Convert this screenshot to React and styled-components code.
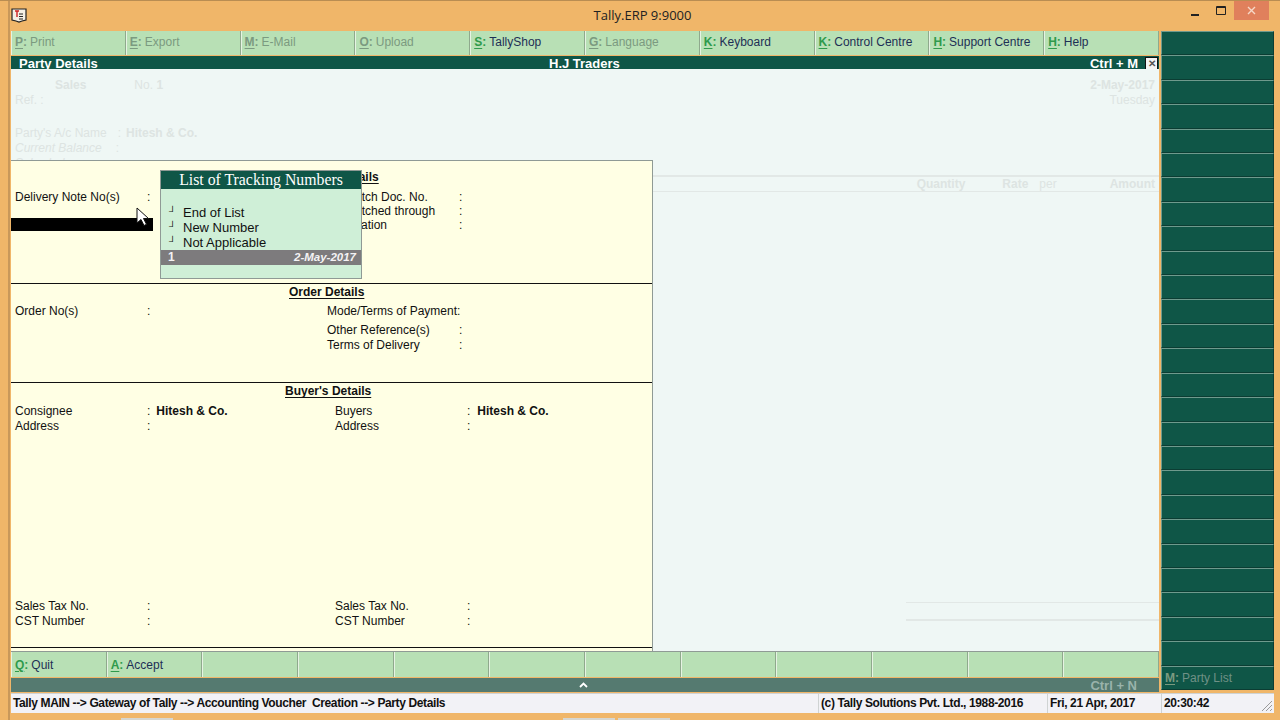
import React from 'react';
import styled, { createGlobalStyle } from 'styled-components';

const GlobalStyle = createGlobalStyle`
  html, body {
    margin: 0;
    padding: 0;
    overflow: hidden;
    background: #f0b669;
  }
  * {
    box-sizing: border-box;
  }
`;

const Window = styled.div`
  background: #f0b669;
  border-top: 1px solid #b98d52;
  color: #111;
  display: flex;
  flex-direction: column;
  font-family: 'Liberation Sans', Arial, sans-serif;
  font-size: 12px;
  height: 720px;
  overflow: hidden;
  padding-left: 8px;
  width: 1280px;
`;

const WindowFrame = styled.div`
  border-left: 2px solid #c9985a;
  display: flex;
  flex-direction: column;
  flex: 1;
  min-height: 0;
  padding-left: 1px;
`;

const TitleBar = styled.div`
  align-items: flex-start;
  display: flex;
  flex: none;
  height: 30px;
  justify-content: space-between;
`;

const AppIcon = styled.svg`
  height: 16px;
  margin-top: 6px;
  width: 16px;
`;

const Title = styled.div`
  color: #222;
  font-family: 'Open Sans', sans-serif;
  font-size: 13px;
  margin-left: 76px;
  margin-top: 5px;
`;

const WindowControls = styled.div`
  align-items: flex-start;
  display: flex;
  margin-right: 11px;
`;

const ControlButton = styled.div`
  align-items: center;
  background: ${(p) => (p.$close ? '#e0805c' : 'transparent')};
  color: #fff;
  display: flex;
  height: ${(p) => p.$h || 19}px;
  justify-content: center;
  width: ${(p) => (p.$close ? '35px' : '26px')};
`;

const Body = styled.div`
  display: flex;
  flex: none;
  gap: 2px;
  height: 662px;
`;

const MainColumn = styled.div`
  display: flex;
  flex-direction: column;
  width: 1148px;
`;

const ButtonBar = styled.div`
  display: grid;
  flex: none;
  gap: 0;
  grid-template-columns: repeat(${(p) => p.$cols}, 1fr);
  height: ${(p) => p.$height}px;
`;

const BarButton = styled.div`
  align-items: center;
  background: #b8e0b5;
  border-left: 1px solid #e6f3e3;
  border-right: 1px solid #8fa98d;
  color: ${(p) => (p.$off ? '#7b9a80' : '#1d2f55')};
  display: flex;
  font-size: 12px;
  padding-bottom: ${(p) => (p.$low ? 0 : 2)}px;
  padding-left: 3px;
  white-space: nowrap;
`;

const KeyLetter = styled.span`
  color: ${(p) => (p.$off ? '#7b9a80' : '#2f9a4c')};
  font-weight: bold;
  margin-right: 3px;

  u {
    text-underline-offset: 2px;
  }
`;

const HeaderBar = styled.div`
  align-items: center;
  background: #0f5647;
  color: #fff;
  display: grid;
  flex: none;
  font-size: 13px;
  font-weight: bold;
  grid-template-columns: 530px auto 1fr;
  height: 13px;
  margin-top: 1px;
  padding-left: 8px;
`;

const HeaderRight = styled.div`
  align-items: center;
  display: flex;
  gap: 7px;
  justify-content: flex-end;
  padding-right: 1px;
`;

const CloseBox = styled.div`
  align-items: center;
  background: #f4f4f4;
  border: 1px solid #111;
  color: #555;
  display: flex;
  font-size: 10px;
  height: 13px;
  justify-content: center;
  line-height: 1;
  width: 13px;
`;

const Content = styled.div`
  background: #eff7f5;
  border-bottom: 1px solid #8f9a95;
  flex: none;
  height: 583px;
  position: relative;
`;

const GhostForm = styled.div`
  color: #dde4e2;
  display: flex;
  flex-direction: column;
  padding: 9px 4px 0 4px;
`;

const GhostRow = styled.div`
  display: flex;
  height: 15px;
  justify-content: space-between;
  line-height: 15px;
  margin-top: ${(p) => p.$top || 0}px;
`;

const GhostText = styled.span`
  font-style: ${(p) => (p.$italic ? 'italic' : 'normal')};
  font-weight: ${(p) => (p.$bold ? 'bold' : 'normal')};
  margin-left: ${(p) => p.$left || 0}px;
`;

const GhostTableHead = styled.div`
  border-bottom: 1px solid #e2e8e6;
  border-top: 2px solid #e2e8e6;
  color: #dde4e2;
  display: flex;
  font-weight: bold;
  height: 17px;
  justify-content: flex-end;
  line-height: 15px;
  margin-left: 642px;
  margin-top: 4px;
  padding-right: 4px;
`;

const GhostHeadCell = styled.span`
  font-weight: ${(p) => (p.$light ? 'normal' : 'bold')};
  margin-right: ${(p) => p.$right || 0}px;
`;

const GhostRule = styled.div`
  background: #e2e8e6;
  height: ${(p) => p.$h || 1}px;
  margin-left: 895px;
  margin-top: ${(p) => p.$top}px;
`;

const PartyPanel = styled.div`
  background: #ffffe4;
  border-right: 1px solid #8f9a95;
  border-top: 1px solid #8f9a95;
  height: 491px;
  left: 0;
  position: absolute;
  top: 91px;
  width: 642px;
`;

const PanelSection = styled.section`
  border-bottom: 1px solid #111;
  height: ${(p) => p.$height}px;
  padding-top: ${(p) => p.$pad}px;
  position: relative;
`;

const SectionTitle = styled.div`
  font-weight: bold;
  line-height: 14px;
  margin-left: ${(p) => p.$left}px;
  text-decoration: underline;
  text-underline-offset: 2px;
  width: max-content;
`;

const FieldGrid = styled.div`
  display: grid;
  grid-template-columns: ${(p) => p.$cols || '1fr 1fr'};
  margin-top: ${(p) => p.$top || 0}px;
`;

const FieldCol = styled.div`
  display: flex;
  flex-direction: column;
  padding-left: ${(p) => p.$left}px;
`;

const Field = styled.div`
  display: flex;
  height: ${(p) => p.$h || 14}px;
  line-height: 14px;
  white-space: nowrap;
`;

const FieldLabel = styled.span`
  width: ${(p) => p.$w}px;
`;

const FieldValue = styled.span`
  font-weight: bold;
  margin-left: ${(p) => p.$left || 6}px;
`;

const HighlightBar = styled.div`
  background: #000;
  height: 13px;
  position: absolute;
  left: 0;
  top: 57px;
  width: 142px;
`;

const Pointer = styled.svg`
  height: 20px;
  left: 125px;
  position: absolute;
  top: 46px;
  width: 14px;
`;

const TrackingPopup = styled.div`
  background: #cfefd7;
  border: 1px solid #8f9a95;
  height: 109px;
  left: 149px;
  position: absolute;
  top: 9px;
  width: 202px;
`;

const PopupTitle = styled.div`
  background: #0f5647;
  color: #fff;
  font-family: 'Liberation Serif', 'Times New Roman', serif;
  font-size: 15.8px;
  height: 18px;
  line-height: 18px;
  text-align: center;
`;

const PopupList = styled.div`
  display: flex;
  flex-direction: column;
  padding-top: 16px;
`;

const PopupItem = styled.div`
  display: flex;
  font-size: 13px;
  height: 15px;
  line-height: 15px;
  padding-left: 8px;
`;

const ItemMark = styled.span`
  font-size: 10px;
  line-height: 13px;
  width: 14px;
`;

const PopupSelected = styled.div`
  background: #7d7b7d;
  color: #f4f2f4;
  display: flex;
  font-weight: bold;
  height: 15px;
  justify-content: space-between;
  line-height: 15px;
  padding: 0 5px 0 7px;

  em {
    font-size: 11.5px;
  }
`;

const KeyStrip = styled.div`
  align-items: center;
  background: #557a70;
  color: #9ab3ab;
  display: flex;
  flex: none;
  font-size: 13px;
  font-weight: bold;
  height: 14px;
  margin-top: 1px;
  padding-right: 22px;
  position: relative;
  justify-content: flex-end;
`;

const ChevronUp = styled.svg`
  height: 6px;
  left: 568px;
  position: absolute;
  top: 4px;
  width: 9px;
`;

const Sidebar = styled.div`
  display: grid;
  flex: none;
  grid-template-rows: repeat(27, 1fr);
  height: 659px;
  width: 113px;
`;

const SideButton = styled.div`
  align-items: center;
  background: #0f5647;
  border: 1px solid #0b3d33;
  border-left-color: #6f9a8d;
  border-top-color: #6f9a8d;
  color: #6f9186;
  display: flex;
  padding-left: 3px;
`;

const StatusBar = styled.div`
  background: #f2f2f6;
  border-top: 1px solid #cfd3d3;
  display: grid;
  flex: none;
  font-size: 12px;
  font-weight: bold;
  grid-template-columns: 807px 229px 114px 1fr;
  height: 20px;
  letter-spacing: -0.38px;
  line-height: 19px;
  margin-right: 6px;
  position: relative;
`;

const StatusCell = styled.div`
  border-left: ${(p) => (p.$first ? 'none' : '1px solid #cfd3d3')};
  padding-left: 2px;
  white-space: nowrap;
`;

const Grip = styled.svg`
  bottom: 1px;
  height: 12px;
  position: absolute;
  right: 1px;
  width: 12px;
`;

const BehindWindow = styled.div`
  display: flex;
  flex: none;
  gap: 3px;
  height: 2px;
  margin-top: 5px;
  padding-left: 110px;
`;

const BehindTab = styled.div`
  background: #d6d6d0;
  margin-left: ${(p) => p.$left || 0}px;
  width: 52px;
`;

const topButtons = [
  ['P', 'Print', true],
  ['E', 'Export', true],
  ['M', 'E-Mail', true],
  ['O', 'Upload', true],
  ['S', 'TallyShop', false],
  ['G', 'Language', true],
  ['K', 'Keyboard', false],
  ['K', 'Control Centre', false],
  ['H', 'Support Centre', false],
  ['H', 'Help', false]
];

const bottomButtons = [['Q', 'Quit'], ['A', 'Accept'], [], [], [], [], [], [], [], [], [], []];

const sideButtons = Array.from({ length: 26 }, (_, i) => i);

const KeyButton = ({ letter, label, off, low }) => (
  <BarButton $off={off} $low={low}>
    {letter && (
      <KeyLetter $off={off}>
        <u>{letter}</u>:
      </KeyLetter>
    )}
    {label}
  </BarButton>
);

export default function App() {
  return (
    <Window>
      <GlobalStyle />
      <WindowFrame>
        <TitleBar>
          <AppIcon viewBox="0 0 16 16">
            <path d="M1 2h14v11l-4 1-3 1-3-1-4-1z" fill="#f4efe4" stroke="#222" strokeWidth="1.2" />
            <path d="M4 4h4M6 4v6" stroke="#c22" strokeWidth="1.4" fill="none" />
            <path d="M8 7h4M8 9.5h4M8 12h4" stroke="#222" strokeWidth="1" fill="none" />
          </AppIcon>
          <Title>Tally.ERP 9:9000</Title>
          <WindowControls>
            <ControlButton $h={27}>
              <svg width="8" height="3" viewBox="0 0 8 3">
                <rect width="8" height="2" y="1" fill="#222" />
              </svg>
            </ControlButton>
            <ControlButton>
              <svg width="10" height="9" viewBox="0 0 10 9">
                <path d="M.5 .5h9v8h-9zM.5 1.5h9" fill="none" stroke="#222" />
              </svg>
            </ControlButton>
            <ControlButton $close>
              <svg width="9" height="9" viewBox="0 0 9 9">
                <path d="M1 1l7 7M8 1l-7 7" stroke="#f6d8c8" strokeWidth="1.4" />
              </svg>
            </ControlButton>
          </WindowControls>
        </TitleBar>
        <Body>
          <MainColumn>
            <ButtonBar $cols={10} $height={24}>
              {topButtons.map(([letter, label, off]) => (
                <KeyButton key={label} letter={letter} label={label} off={off} />
              ))}
            </ButtonBar>
            <HeaderBar>
              <span>Party Details</span>
              <span>H.J Traders</span>
              <HeaderRight>
                <span>Ctrl + M</span>
                <CloseBox>✕</CloseBox>
              </HeaderRight>
            </HeaderBar>
            <Content>
              <GhostForm>
                <GhostRow>
                  <div>
                    <GhostText $bold $left={40}>Sales</GhostText>
                    <GhostText $left={48}>No. <b>1</b></GhostText>
                  </div>
                  <GhostText $bold>2-May-2017</GhostText>
                </GhostRow>
                <GhostRow>
                  <GhostText>Ref. :</GhostText>
                  <GhostText>Tuesday</GhostText>
                </GhostRow>
                <GhostRow $top={18}>
                  <div>
                    <GhostText>Party's A/c Name</GhostText>
                    <GhostText $left={11}>:</GhostText>
                    <GhostText $bold $left={5}>Hitesh &amp; Co.</GhostText>
                  </div>
                </GhostRow>
                <GhostRow>
                  <div>
                    <GhostText $italic>Current Balance</GhostText>
                    <GhostText $left={14}>:</GhostText>
                  </div>
                </GhostRow>
                <GhostRow>
                  <GhostText $italic>Sales ledger</GhostText>
                </GhostRow>
              </GhostForm>
              <GhostTableHead>
                <GhostHeadCell $right={37}>Quantity</GhostHeadCell>
                <GhostHeadCell $right={11}>Rate</GhostHeadCell>
                <GhostHeadCell $light $right={53}>per</GhostHeadCell>
                <GhostHeadCell>Amount</GhostHeadCell>
              </GhostTableHead>
              <GhostRule $top={410} />
              <GhostRule $top={16} $h={2} />
              <PartyPanel>
                <PanelSection $height={123} $pad={9}>
                  <SectionTitle $left={271}>Despatch Details</SectionTitle>
                  <FieldGrid $top={6} $cols="312px 1fr">
                    <FieldCol $left={4}>
                      <Field>
                        <FieldLabel $w={132}>Delivery Note No(s)</FieldLabel>
                        <span>:</span>
                      </Field>
                    </FieldCol>
                    <FieldCol $left={4}>
                      <Field>
                        <FieldLabel $w={132}>Despatch Doc. No.</FieldLabel>
                        <span>:</span>
                      </Field>
                      <Field>
                        <FieldLabel $w={132}>Despatched through</FieldLabel>
                        <span>:</span>
                      </Field>
                      <Field>
                        <FieldLabel $w={132}>Destination</FieldLabel>
                        <span>:</span>
                      </Field>
                    </FieldCol>
                  </FieldGrid>
                  <HighlightBar />
                  <Pointer viewBox="0 0 14 20">
                    <path d="M1 1v15l4-3.5 3 6 2.5-1.2-3-5.8h5z" fill="#fff" stroke="#111" strokeWidth="1" />
                  </Pointer>
                  <TrackingPopup>
                    <PopupTitle>List of Tracking Numbers</PopupTitle>
                    <PopupList>
                      {['End of List', 'New Number', 'Not Applicable'].map((item) => (
                        <PopupItem key={item}>
                          <ItemMark>┘</ItemMark>
                          {item}
                        </PopupItem>
                      ))}
                      <PopupSelected>
                        <span>1</span>
                        <em>2-May-2017</em>
                      </PopupSelected>
                    </PopupList>
                  </TrackingPopup>
                </PanelSection>
                <PanelSection $height={99} $pad={1}>
                  <SectionTitle $left={278}>Order Details</SectionTitle>
                  <FieldGrid $top={5} $cols="312px 1fr">
                    <FieldCol $left={4}>
                      <Field>
                        <FieldLabel $w={132}>Order No(s)</FieldLabel>
                        <span>:</span>
                      </Field>
                    </FieldCol>
                    <FieldCol $left={4}>
                      <Field $h={19}>
                        <FieldLabel $w={132}>Mode/Terms of Payment:</FieldLabel>
                      </Field>
                      <Field $h={15}>
                        <FieldLabel $w={132}>Other Reference(s)</FieldLabel>
                        <span>:</span>
                      </Field>
                      <Field>
                        <FieldLabel $w={132}>Terms of Delivery</FieldLabel>
                        <span>:</span>
                      </Field>
                    </FieldCol>
                  </FieldGrid>
                </PanelSection>
                <PanelSection $height={265} $pad={1}>
                  <SectionTitle $left={274}>Buyer's Details</SectionTitle>
                  <FieldGrid $top={6} $cols="320px 1fr">
                    <FieldCol $left={4}>
                      <Field $h={15}>
                        <FieldLabel $w={132}>Consignee</FieldLabel>
                        <span>:</span>
                        <FieldValue>Hitesh &amp; Co.</FieldValue>
                      </Field>
                      <Field $h={180}>
                        <FieldLabel $w={132}>Address</FieldLabel>
                        <span>:</span>
                      </Field>
                      <Field $h={15}>
                        <FieldLabel $w={132}>Sales Tax No.</FieldLabel>
                        <span>:</span>
                      </Field>
                      <Field>
                        <FieldLabel $w={132}>CST Number</FieldLabel>
                        <span>:</span>
                      </Field>
                    </FieldCol>
                    <FieldCol $left={4}>
                      <Field $h={15}>
                        <FieldLabel $w={132}>Buyers</FieldLabel>
                        <span>:</span>
                        <FieldValue $left={7}>Hitesh &amp; Co.</FieldValue>
                      </Field>
                      <Field $h={180}>
                        <FieldLabel $w={132}>Address</FieldLabel>
                        <span>:</span>
                      </Field>
                      <Field $h={15}>
                        <FieldLabel $w={132}>Sales Tax No.</FieldLabel>
                        <span>:</span>
                      </Field>
                      <Field>
                        <FieldLabel $w={132}>CST Number</FieldLabel>
                        <span>:</span>
                      </Field>
                    </FieldCol>
                  </FieldGrid>
                </PanelSection>
              </PartyPanel>
            </Content>
            <ButtonBar $cols={12} $height={25}>
              {bottomButtons.map(([letter, label], i) => (
                <KeyButton key={i} letter={letter} label={label} low />
              ))}
            </ButtonBar>
            <KeyStrip>
              <ChevronUp viewBox="0 0 9 6">
                <path d="M1 5l3.5-3.5L8 5" fill="none" stroke="#fff" strokeWidth="1.8" />
              </ChevronUp>
              Ctrl + N
            </KeyStrip>
          </MainColumn>
          <Sidebar>
            {sideButtons.map((i) => (
              <SideButton key={i} />
            ))}
            <SideButton>
              <KeyLetter $off>
                <u>M</u>:
              </KeyLetter>
              Party List
            </SideButton>
          </Sidebar>
        </Body>
        <StatusBar>
          <StatusCell $first>Tally MAIN --&gt; Gateway of Tally --&gt; Accounting Voucher&nbsp; Creation --&gt; Party Details</StatusCell>
          <StatusCell>(c) Tally Solutions Pvt. Ltd., 1988-2016</StatusCell>
          <StatusCell>Fri, 21 Apr, 2017</StatusCell>
          <StatusCell>20:30:42</StatusCell>
          <Grip viewBox="0 0 12 12">
            <path d="M11 1L1 11M11 5l-6 6M11 9l-2 2" stroke="#9a9a9a" strokeWidth="1" fill="none" />
          </Grip>
        </StatusBar>
        <BehindWindow>
          <BehindTab />
          <BehindTab $left={387} />
          <BehindTab />
        </BehindWindow>
      </WindowFrame>
    </Window>
  );
}
